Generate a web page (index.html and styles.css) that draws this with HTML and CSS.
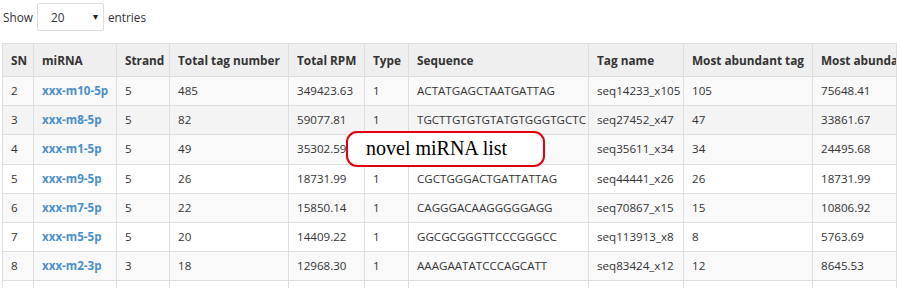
FILE: index.html
```html
<!DOCTYPE html>
<html lang="en">
<head>
  <meta charset="UTF-8" />
  <title>novel miRNA list</title>
  <link rel="stylesheet" href="styles.css">
</head>
<body>
  <div class="length-bar">
    <label>Show</label>
    <span class="select-wrap">
      <select name="entries">
        <option>10</option>
        <option selected>20</option>
        <option>50</option>
        <option>100</option>
      </select>
    </span>
    <label>entries</label>
  </div>

  <div class="table-wrap">
    <table class="mirna-table">
      <colgroup>
        <col style="width: 31px">
        <col style="width: 83px">
        <col style="width: 53px">
        <col style="width: 119px">
        <col style="width: 76px">
        <col style="width: 44px">
        <col style="width: 180px">
        <col style="width: 95px">
        <col style="width: 129px">
        <col style="width: 170px">
      </colgroup>
      <thead>
        <tr>
          <th>SN</th>
          <th>miRNA</th>
          <th>Strand</th>
          <th>Total tag number</th>
          <th>Total RPM</th>
          <th>Type</th>
          <th>Sequence</th>
          <th>Tag name</th>
          <th>Most abundant tag</th>
          <th>Most abundant RPM</th>
        </tr>
      </thead>
      <tbody>
        <tr>
          <td>2</td><td><a href="#">xxx-m10-5p</a></td><td>5</td><td>485</td><td>349423.63</td><td>1</td>
          <td>ACTATGAGCTAATGATTAG</td><td>seq14233_x105</td><td>105</td><td>75648.41</td>
        </tr>
        <tr class="hovered">
          <td>3</td><td><a href="#">xxx-m8-5p</a></td><td>5</td><td>82</td><td>59077.81</td><td>1</td>
          <td>TGCTTGTGTGTATGTGGGTGCTC</td><td>seq27452_x47</td><td>47</td><td>33861.67</td>
        </tr>
        <tr>
          <td>4</td><td><a href="#">xxx-m1-5p</a></td><td>5</td><td>49</td><td>35302.59</td><td>1</td>
          <td></td><td>seq35611_x34</td><td>34</td><td>24495.68</td>
        </tr>
        <tr>
          <td>5</td><td><a href="#">xxx-m9-5p</a></td><td>5</td><td>26</td><td>18731.99</td><td>1</td>
          <td>CGCTGGGACTGATTATTAG</td><td>seq44441_x26</td><td>26</td><td>18731.99</td>
        </tr>
        <tr>
          <td>6</td><td><a href="#">xxx-m7-5p</a></td><td>5</td><td>22</td><td>15850.14</td><td>1</td>
          <td>CAGGGACAAGGGGGAGG</td><td>seq70867_x15</td><td>15</td><td>10806.92</td>
        </tr>
        <tr>
          <td>7</td><td><a href="#">xxx-m5-5p</a></td><td>5</td><td>20</td><td>14409.22</td><td>1</td>
          <td>GGCGCGGGTTCCCGGGCC</td><td>seq113913_x8</td><td>8</td><td>5763.69</td>
        </tr>
        <tr>
          <td>8</td><td><a href="#">xxx-m2-3p</a></td><td>3</td><td>18</td><td>12968.30</td><td>1</td>
          <td>AAAGAATATCCCAGCATT</td><td>seq83424_x12</td><td>12</td><td>8645.53</td>
        </tr>
        <tr>
          <td>&nbsp;</td><td></td><td></td><td></td><td></td><td></td><td></td><td></td><td></td><td></td>
        </tr>
      </tbody>
    </table>

    <div class="callout">novel miRNA list</div>
  </div>
</body>
</html>
```

FILE: styles.css
```css
:root {
  --text: #333;
  --border: #dedede;
  --head-bg: #efefef;
  --stripe: #f9f9f9;
  --hover: #f4f4f4;
  --link: #4b8fca;
}

* {
  box-sizing: border-box;
}

body {
  margin: 0;
  padding: 3px 0 0 2px;
  font-family: "Open Sans", "Noto Sans", sans-serif;
  font-size: 11.6px;
  color: var(--text);
  background: #fff;
  overflow: hidden;
}

.length-bar {
  display: flex;
  align-items: center;
  gap: 4px;
  height: 28px;
  padding-left: 1px;
  font-size: 11.8px;
}

.select-wrap {
  position: relative;
  display: inline-block;
}

.select-wrap select {
  appearance: none;
  -webkit-appearance: none;
  width: 67px;
  height: 28px;
  padding: 0 0 0 13px;
  border: 1px solid #dcdcdc;
  border-radius: 2px;
  background: #fff;
  font-family: inherit;
  font-size: 11.8px;
  color: var(--text);
}

.select-wrap::after {
  content: "\25BE";
  position: absolute;
  right: 6px;
  top: 6px;
  font-size: 10px;
  color: #222;
  pointer-events: none;
}

.table-wrap {
  position: relative;
  width: 895px;
  margin-top: 12px;
  overflow: hidden;
  border-right: 1px solid var(--border);
}

.mirna-table {
  table-layout: fixed;
  border-collapse: collapse;
  width: 980px;
}

.mirna-table th,
.mirna-table td {
  border: 1px solid var(--border);
  padding: 6px 8px;
  text-align: left;
  white-space: nowrap;
  overflow: hidden;
  vertical-align: middle;
}

.mirna-table th {
  background: var(--head-bg);
  font-weight: 700;
  line-height: 18px;
  padding: 7px 8px;
  font-size: 11.8px;
}

.mirna-table td {
  line-height: 16.2px;
}

.mirna-table tbody tr:nth-child(odd) {
  background: var(--stripe);
}

.mirna-table tbody tr.hovered {
  background: var(--hover);
}

.mirna-table a {
  color: var(--link);
  font-weight: 700;
  text-decoration: none;
}

.callout {
  position: absolute;
  left: 344px;
  top: 88px;
  width: 199px;
  height: 36px;
  border: 2px solid #e2000f;
  border-radius: 11px;
  background: #fff;
  padding-left: 18px;
  font-family: "Liberation Serif", serif;
  font-size: 20px;
  line-height: 31px;
  color: #000;
}
```
